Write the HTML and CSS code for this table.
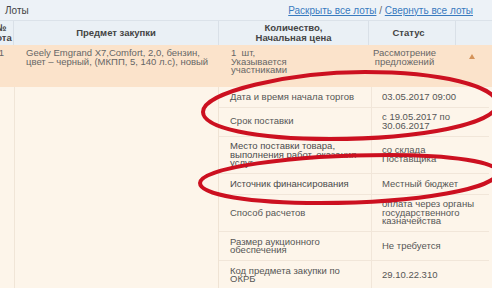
FILE: index.html
```html
<!DOCTYPE html>
<html lang="ru">
<head>
<meta charset="utf-8">
<title>Лоты</title>
<link rel="stylesheet" href="styles.css">
</head>
<body>
<div class="page">
  <div class="titlebar">
    <span class="title">Лоты</span>
    <span class="links"><a href="#">Раскрыть все лоты</a> / <a href="#">Свернуть все лоты</a></span>
  </div>
  <div class="thead">
    <div class="th">№<br>лота</div>
    <div class="th">Предмет закупки</div>
    <div class="th">Количество,<br>Начальная цена</div>
    <div class="th th-status">Статус</div>
    <div class="th th-last"></div>
  </div>
  <div class="lot">
    <div class="td td-num">1</div>
    <div class="td td-subj">Geely Emgrand X7,Comfort, 2,0, бензин,<br>цвет – черный, (МКПП, 5, 140 л.с), новый</div>
    <div class="td td-qty">1&nbsp; шт,<br>Указывается<br>участниками</div>
    <div class="td td-status">Рассмотрение<br>предложений</div>
    <div class="td td-toggle"><span class="tri"></span></div>
  </div>
  <div class="details">
    <div class="d-num"></div>
    <div class="d-subj"></div>
    <div class="subtable">
      <div class="row"><div class="lbl">Дата и время начала торгов</div><div class="val">03.05.2017 09:00</div></div>
      <div class="row"><div class="lbl">Срок поставки</div><div class="val">с 19.05.2017 по<br>30.06.2017</div></div>
      <div class="row"><div class="lbl lbl-dark">Место поставки товара,<br>выполнения работ, оказания<br>услуг</div><div class="val">со склада<br>Поставщика</div></div>
      <div class="row"><div class="lbl lbl-dark">Источник финансирования</div><div class="val">Местный бюджет</div></div>
      <div class="row"><div class="lbl">Способ расчетов</div><div class="val">оплата через органы<br>государственного<br>казначейства</div></div>
      <div class="row"><div class="lbl">Размер аукционного<br>обеспечения</div><div class="val">Не требуется</div></div>
      <div class="row"><div class="lbl">Код предмета закупки по<br>ОКРБ</div><div class="val">29.10.22.310</div></div>
    </div>
  </div>
  <svg class="marks" width="492" height="288" viewBox="0 0 492 288" aria-hidden="true">
    <path d="M203,112 C203,92 290,72 365,72 C440,72 497,86 497,104 C497,124 420,139 330,139 C255,139 203,128 203,112 Z" />
    <path d="M200,183 C200,168 290,155 390,155 C450,155 498,162 498,172 C498,188 420,203 320,203 C250,203 200,195 200,183 Z" />
  </svg>
</div>
</body>
</html>
```

FILE: styles.css
```css
html, body {
  margin: 0;
  padding: 0;
}

body {
  font-family: "Liberation Sans", Arial, sans-serif;
  font-size: 9.5px;
  color: #555;
  background: #fdf5ea;
}

.page {
  position: relative;
  width: 492px;
  height: 288px;
  overflow: hidden;
}

.titlebar {
  height: 20px;
  background: #edf2f7;
  border-bottom: 1px solid #dbe2e9;
  display: flex;
  align-items: center;
  justify-content: space-between;
  padding: 0 19px 0 5px;
}

.title {
  font-size: 10px;
  color: #444;
}

.links {
  font-size: 10px;
  color: #666;
}

.links a {
  color: #3a7bbf;
  text-decoration: underline;
}

.thead,
.lot {
  display: grid;
  grid-template-columns: 25px 205px 150px 87px 36px;
  margin-left: -11px;
}

.thead {
  height: 24px;
  background: #eaf0f5;
}

.th {
  display: flex;
  align-items: center;
  justify-content: center;
  text-align: center;
  font-weight: bold;
  color: #444;
  line-height: 10px;
  border-right: 1px solid #d9e0e7;
}

.th-status {
  padding-right: 7px;
}

.th-last {
  border-right: none;
}

.lot {
  height: 42px;
  background: #fbe3cb;
  color: #666;
  line-height: 8.5px;
}

.td {
  padding-top: 4px;
}

.td-num {
  text-align: center;
}

.td-subj,
.td-qty {
  padding-left: 12px;
}

.td-status {
  text-align: center;
  padding-right: 16px;
}

.td-toggle {
  display: flex;
  justify-content: center;
  padding-top: 9px;
  padding-right: 4px;
}

.tri {
  width: 0;
  height: 0;
  border-left: 3.5px solid transparent;
  border-right: 3.5px solid transparent;
  border-bottom: 5px solid #d4935a;
}

.details {
  display: flex;
  margin-left: -11px;
  height: 201px;
}

.d-num {
  width: 25px;
  border-right: 1px solid #f0e5d7;
}

.d-subj {
  width: 203px;
}

.subtable {
  width: 270px;
  border-left: 1px solid #efe3d4;
}

.row {
  display: grid;
  grid-template-columns: 153px 1fr;
  border-bottom: 1px solid #f1e6d9;
  line-height: 8.5px;
}

.lbl,
.val {
  display: flex;
  align-items: center;
  padding: 5.5px 0;
}

.lbl {
  padding-left: 11px;
  border-right: 1px solid #f1e6d9;
}

.lbl-dark {
  color: #4a4a4a;
}

.val {
  padding-left: 10px;
}

.marks {
  position: absolute;
  left: 0;
  top: 0;
  pointer-events: none;
}

.marks path {
  fill: none;
  stroke: #cc1020;
  stroke-width: 4;
  stroke-linecap: round;
  stroke-linejoin: round;
}
```
